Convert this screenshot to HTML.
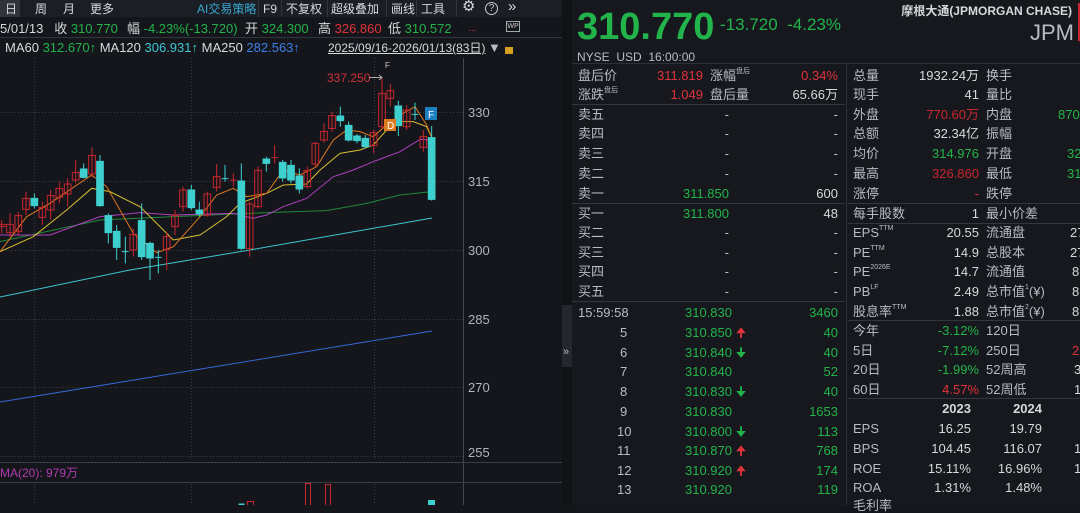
<!DOCTYPE html>
<html><head><meta charset="utf-8">
<style>
*{margin:0;padding:0;box-sizing:border-box}
body{width:1080px;height:505px;overflow:hidden;background:#14161b;font-family:"Liberation Sans","Noto Sans CJK SC",sans-serif;color:#c8ccd2;position:relative}
.t{position:absolute;white-space:nowrap;font-size:13px;line-height:14px}
.s{font-size:7px;line-height:7px;vertical-align:top;position:relative;top:-1px}
.g{color:#22b44a}.r{color:#e0333b}.dr{color:#c8262e}.w{color:#d5d8dc}.gy{color:#b8bcc2}.c{color:#3ec6d0}.b{color:#3d7fe6}
.hl{position:absolute;height:1px;background:#33363c}
.vl{position:absolute;width:1px;background:#33363c}
.tb{font-size:12px}
</style></head><body>
<!-- left toolbar -->
<div style="position:absolute;left:0;top:0;width:562px;height:17px;background:#1b1e24"></div>
<div style="position:absolute;left:0;top:0;width:20px;height:17px;background:#30333a"></div>
<div class="t w tb" style="left:5px;top:2px">日</div>
<div class="t w tb" style="left:35px;top:2px">周</div>
<div class="t w tb" style="left:63px;top:2px">月</div>
<div class="t w tb" style="left:90px;top:2px">更多</div>
<div class="t tb" style="left:197px;top:2px;color:#3aa7d0">AI交易策略</div>
<div class="t w tb" style="left:263px;top:2px">F9</div>
<div class="t w tb" style="left:286px;top:2px">不复权</div>
<div class="t w tb" style="left:331px;top:2px">超级叠加</div>
<div class="t w tb" style="left:391px;top:2px">画线</div>
<div class="t w tb" style="left:421px;top:2px">工具</div>
<div class="t w" style="left:462px;top:0px;font-size:15px">⚙</div>
<div style="position:absolute;left:485px;top:2px;width:13px;height:13px;border:1px solid #c8ccd2;border-radius:50%;font-size:10px;line-height:11px;text-align:center">?</div>
<div class="t w" style="left:508px;top:0px;font-size:15px">»</div>
<div class="vl" style="left:258px;top:0;height:17px"></div><div class="vl" style="left:281px;top:0;height:17px"></div>
<div class="vl" style="left:327px;top:0;height:17px"></div><div class="vl" style="left:386px;top:0;height:17px"></div>
<div class="vl" style="left:416px;top:0;height:17px"></div><div class="vl" style="left:456px;top:0;height:17px"></div>
<!-- row2 -->
<div class="t w" style="left:0;top:22px">5/01/13 &nbsp;&nbsp;收 <span class="g">310.770</span></div>
<div class="t w" style="left:127px;top:22px">幅 <span class="g">-4.23%(-13.720)</span></div>
<div class="t w" style="left:245px;top:22px">开 <span class="g">324.300</span></div>
<div class="t w" style="left:318px;top:22px">高 <span class="r">326.860</span></div>
<div class="t w" style="left:388px;top:22px">低 <span class="g">310.572</span></div>
<div class="t r" style="left:468px;top:22px;font-size:10px">...</div>
<div style="position:absolute;left:506px;top:21px;width:14px;height:11px;border:1px solid #9aa;font-size:7px;line-height:9px;text-align:center;color:#ccc">WP</div>
<div class="hl" style="left:0;top:37px;width:562px"></div>
<!-- row3 -->
<div class="t w" style="left:5px;top:41px">MA60 <span class="g">312.670↑</span> MA120 <span class="c">306.931↑</span> MA250 <span class="b">282.563↑</span></div>
<div class="t w" style="left:328px;top:41px;font-size:12px;text-decoration:underline">2025/09/16-2026/01/13(83日)</div>
<div class="t gy" style="left:488px;top:41px">▼</div>
<div style="position:absolute;left:505px;top:47px;width:8px;height:7px;background:#d8a020"></div>
<!-- chart -->
<svg style="position:absolute;left:0;top:0" width="562" height="505">
<g stroke="#3a3d44" stroke-dasharray="1,2" stroke-width="1">
<line x1="0" y1="112.5" x2="463" y2="112.5"/><line x1="0" y1="181.5" x2="463" y2="181.5"/><line x1="0" y1="250.5" x2="463" y2="250.5"/><line x1="0" y1="319.5" x2="463" y2="319.5"/><line x1="0" y1="387.5" x2="463" y2="387.5"/><line x1="0" y1="456.5" x2="463" y2="456.5"/>
<line x1="34.5" y1="58" x2="34.5" y2="460"/><line x1="191.5" y1="58" x2="191.5" y2="460"/><line x1="374.5" y1="58" x2="374.5" y2="460"/>
<line x1="34.5" y1="484" x2="34.5" y2="505"/><line x1="191.5" y1="484" x2="191.5" y2="505"/><line x1="374.5" y1="484" x2="374.5" y2="505"/>
</g>
<line x1="463.5" y1="58" x2="463.5" y2="505" stroke="#44474e"/>
<line x1="0" y1="462.5" x2="562" y2="462.5" stroke="#3a3d44"/>
<line x1="0" y1="482.5" x2="562" y2="482.5" stroke="#3a3d44"/>
<g fill="#b0b4ba" font-size="13" font-family="Liberation Sans"><text x="468" y="117">330</text><text x="468" y="186">315</text><text x="468" y="255">300</text><text x="468" y="324">285</text><text x="468" y="392">270</text><text x="468" y="457">255</text></g>
<text x="0" y="477" fill="#b03cb0" font-size="12" font-family="Liberation Sans">MA(20): 979万</text>
<polyline fill="none" stroke="#3ec6d0" stroke-width="1" points="0,297 130,270 250,250 432,218"/>
<polyline fill="none" stroke="#3568d8" stroke-width="1" points="0,402 432,331"/>
<g transform="translate(0,60) scale(0.33333)" fill="none" stroke-width="3">
<polyline stroke="#1f8a3a" points="0,545 300,480 700,462 800,458 980,452 1100,430 1200,405 1295,395"/>
<polyline stroke="#b040c0" points="0,525 150,525 300,470 420,458 520,465 700,460 760,475 800,465 850,440 920,415 1000,350 1060,330 1120,305 1200,275 1260,238 1295,240"/>
<polyline stroke="#d8c030" points="0,575 100,530 200,450 275,385 330,395 420,440 520,540 600,525 680,470 720,430 800,400 850,375 920,372 960,330 1020,280 1080,270 1120,255 1160,210 1200,185 1240,185 1280,200 1295,232"/>
<polyline stroke="#e07a20" points="0,575 80,470 150,430 275,345 320,380 400,520 470,578 520,560 600,470 650,405 700,385 740,410 800,400 850,330 900,345 950,320 1000,240 1040,210 1080,215 1120,230 1160,195 1200,165 1245,140 1280,195 1295,232"/>
</g>
<g transform="translate(0,60) scale(0.33333)" stroke-width="3">
<g fill="none" stroke="#c8262e">
<path d="M5 480V520M-5 493h20v7h-20z"/>
<path d="M30 460V530M20 493h20v25h-20z"/>
<path d="M55 455V525M45 467h20v48h-20z"/>
<path d="M78 395V465M68 415h20v33h-20z"/>
<path d="M127 425V495M117 443h20v29h-20z"/>
<path d="M152 390V480M142 407h20v43h-20z"/>
<path d="M178 365V430M168 385h20v27h-20z"/>
<path d="M203 355V440M193 372h20v30h-20z"/>
<path d="M227 300V370M217 337h20v23h-20z"/>
<path d="M276 262V352M266 286h20v56h-20z"/>
<path d="M400 505V590M390 523h20v47h-20z"/>
<path d="M500 515V630M490 530h20v38h-20z"/>
<path d="M525 450V525M515 466h20v34h-20z"/>
<path d="M549 380V455M539 390h20v50h-20z"/>
<path d="M622 395V470M612 402h20v63h-20z"/>
<path d="M650 312V395M640 350h20v33h-20z"/>
<path d="M700 340V380M690 360h20"/>
<path d="M749 425V590M739 432h20v133h-20z"/>
<path d="M774 320V445M764 331h20v109h-20z"/>
<path d="M824 255V310M814 293h20"/>
<path d="M922 320V385M912 332h20v48h-20z"/>
<path d="M946 245V320M936 250h20v62h-20z"/>
<path d="M972 190V248M962 214h20v26h-20z"/>
<path d="M996 155V215M986 167h20v38h-20z"/>
<path d="M1121 210V280M1111 218h20v39h-20z"/>
<path d="M1146 55V205M1136 100h20v100h-20z"/>
<path d="M1171 72V140M1161 92h20v23h-20z"/>
<path d="M1220 135V210M1210 150h20v50h-20z"/>
<path d="M1270 210V275M1260 230h20v32h-20z"/>
</g>
<g fill="#3ecfcf" stroke="#3ecfcf">
<path d="M103 400V445M93 415h20v22h-20z"/>
<path d="M251 310V355M241 327h20v25h-20z"/>
<path d="M300 285V440M290 304h20v133h-20z"/>
<path d="M325 460V550M315 467h20v51h-20z"/>
<path d="M350 495V600M340 514h20v48h-20z"/>
<path d="M376 530V610M366 575h20"/>
<path d="M425 430V600M415 482h20v108h-20z"/>
<path d="M450 545V660M440 550h20v44h-20z"/>
<path d="M475 570V640M465 592h20"/>
<path d="M574 375V450M564 390h20v53h-20z"/>
<path d="M598 425V470M588 450h20v12h-20z"/>
<path d="M675 315V365M665 356h20"/>
<path d="M724 310V570M714 363h20v202h-20z"/>
<path d="M799 290V335M789 297h20v13h-20z"/>
<path d="M848 300V365M838 307h20v47h-20z"/>
<path d="M873 300V370M863 316h20v44h-20z"/>
<path d="M898 325V400M888 348h20v39h-20z"/>
<path d="M1021 140V200M1011 168h20v14h-20z"/>
<path d="M1046 185V245M1036 196h20v44h-20z"/>
<path d="M1071 222V250M1061 228h20v14h-20z"/>
<path d="M1096 225V265M1086 235h20v25h-20z"/>
<path d="M1195 122V228M1185 138h20v59h-20z"/>
<path d="M1245 128V180M1235 163h20"/>
<path d="M1295 198V422M1285 233h20v185h-20z"/>
</g>
</g>
<text x="327" y="82" fill="#d0303a" font-size="12" font-family="Liberation Sans">337.250</text>
<path d="M369 77.5h13M379 75l3 2.5-3 2.5" stroke="#aaa" fill="none"/>
<text x="385" y="68" fill="#ccc" font-size="8" font-family="Liberation Sans">F</text>
<rect x="384" y="119" width="12" height="12" fill="#e07a20"/><text x="387" y="129" fill="#fff" font-size="10" font-family="Liberation Sans">D</text>
<rect x="425" y="107" width="12" height="13" fill="#1e7fc0"/><text x="428" y="118" fill="#fff" font-size="10" font-family="Liberation Sans">F</text>
<rect x="238.5" y="503.5" width="6" height="3" fill="#3ecfcf"/><rect x="247.5" y="501.5" width="6" height="5" fill="none" stroke="#c8262e"/>
<rect x="305.5" y="483.5" width="5" height="22" fill="none" stroke="#c8262e"/><rect x="325.5" y="484.5" width="5" height="22" fill="none" stroke="#c8262e"/>
<rect x="428" y="500" width="7" height="6" fill="#3ecfcf"/>
</svg>
<!-- separator -->
<div style="position:absolute;left:562px;top:0;width:10px;height:505px;background:#101216"></div>
<div style="position:absolute;left:562px;top:305px;width:10px;height:62px;background:#24272d"></div>
<div class="t gy" style="left:563px;top:345px;font-size:11px">»</div>
<!-- right panel -->
<div style="position:absolute;left:572px;top:0;width:508px;height:505px;background:#16181d"></div>
<div class="t g" style="left:577px;top:7px;font-size:38px;line-height:40px;font-weight:bold">310.770</div>
<div class="t g" style="left:720px;top:15px;font-size:17px;line-height:20px">-13.720&nbsp;&nbsp;-4.23%</div>
<div class="t w" style="right:8px;top:4px;font-size:12px;font-weight:bold">摩根大通(JPMORGAN CHASE)</div>
<div class="t gy" style="right:6px;top:21px;font-size:22px;line-height:24px">JPM</div>
<div style="position:absolute;left:1078px;top:3px;width:2px;height:38px;background:#c8262e"></div>
<div class="t gy" style="left:577px;top:50px;font-size:12px">NYSE&nbsp; USD&nbsp; 16:00:00</div>
<div class="hl" style="left:572px;top:63px;width:508px;background:#2e3137"></div>
<div class="vl" style="left:846px;top:64px;height:441px;background:#2e3137"></div>
<div class="hl" style="left:572px;top:104px;width:273px"></div>
<div class="hl" style="left:572px;top:203px;width:273px"></div>
<div class="hl" style="left:572px;top:301px;width:273px"></div>
<div class="hl" style="left:848px;top:203px;width:232px"></div>
<div class="hl" style="left:848px;top:223px;width:232px"></div>
<div class="hl" style="left:848px;top:320px;width:232px"></div>
<div class="hl" style="left:848px;top:398px;width:232px"></div>

<!-- left subpanel -->
<div class="t gy" style="left:578px;top:69px">盘后价</div><div class="t r" style="right:377px;top:69px">311.819</div>
<div class="t gy" style="left:710px;top:69px">涨幅<span class="s">盘后</span></div><div class="t r" style="right:242px;top:69px">0.34%</div>
<div class="t gy" style="left:578px;top:88px">涨跌<span class="s">盘后</span></div><div class="t r" style="right:377px;top:88px">1.049</div>
<div class="t gy" style="left:710px;top:88px">盘后量</div><div class="t w" style="right:242px;top:88px">65.66万</div>

<div class="t gy" style="left:578px;top:108px">卖五</div><div class="t gy" style="right:351px;top:108px">-</div><div class="t gy" style="right:242px;top:108px">-</div>
<div class="t gy" style="left:578px;top:127px">卖四</div><div class="t gy" style="right:351px;top:127px">-</div><div class="t gy" style="right:242px;top:127px">-</div>
<div class="t gy" style="left:578px;top:147px">卖三</div><div class="t gy" style="right:351px;top:147px">-</div><div class="t gy" style="right:242px;top:147px">-</div>
<div class="t gy" style="left:578px;top:167px">卖二</div><div class="t gy" style="right:351px;top:167px">-</div><div class="t gy" style="right:242px;top:167px">-</div>
<div class="t gy" style="left:578px;top:187px">卖一</div><div class="t g" style="right:351px;top:187px">311.850</div><div class="t w" style="right:242px;top:187px">600</div>
<div class="t gy" style="left:578px;top:207px">买一</div><div class="t g" style="right:351px;top:207px">311.800</div><div class="t w" style="right:242px;top:207px">48</div>
<div class="t gy" style="left:578px;top:226px">买二</div><div class="t gy" style="right:351px;top:226px">-</div><div class="t gy" style="right:242px;top:226px">-</div>
<div class="t gy" style="left:578px;top:246px">买三</div><div class="t gy" style="right:351px;top:246px">-</div><div class="t gy" style="right:242px;top:246px">-</div>
<div class="t gy" style="left:578px;top:265px">买四</div><div class="t gy" style="right:351px;top:265px">-</div><div class="t gy" style="right:242px;top:265px">-</div>
<div class="t gy" style="left:578px;top:285px">买五</div><div class="t gy" style="right:351px;top:285px">-</div><div class="t gy" style="right:242px;top:285px">-</div>

<div class="t gy" style="left:578px;top:306px">15:59:58</div><div class="t g" style="left:685px;top:306px">310.830</div><div class="t g" style="right:242px;top:306px">3460</div>
<div class="t gy" style="left:620px;top:326px">5</div><div class="t g" style="left:685px;top:326px">310.850 <span class="r">🠉</span></div><div class="t g" style="right:242px;top:326px">40</div>
<div class="t gy" style="left:620px;top:346px">6</div><div class="t g" style="left:685px;top:346px">310.840 <span>🠋</span></div><div class="t g" style="right:242px;top:346px">40</div>
<div class="t gy" style="left:620px;top:365px">7</div><div class="t g" style="left:685px;top:365px">310.840</div><div class="t g" style="right:242px;top:365px">52</div>
<div class="t gy" style="left:620px;top:385px">8</div><div class="t g" style="left:685px;top:385px">310.830 <span>🠋</span></div><div class="t g" style="right:242px;top:385px">40</div>
<div class="t gy" style="left:620px;top:405px">9</div><div class="t g" style="left:685px;top:405px">310.830</div><div class="t g" style="right:242px;top:405px">1653</div>
<div class="t gy" style="left:617px;top:425px">10</div><div class="t g" style="left:685px;top:425px">310.800 <span>🠋</span></div><div class="t g" style="right:242px;top:425px">113</div>
<div class="t gy" style="left:617px;top:444px">11</div><div class="t g" style="left:685px;top:444px">310.870 <span class="r">🠉</span></div><div class="t g" style="right:242px;top:444px">768</div>
<div class="t gy" style="left:617px;top:464px">12</div><div class="t g" style="left:685px;top:464px">310.920 <span class="r">🠉</span></div><div class="t g" style="right:242px;top:464px">174</div>
<div class="t gy" style="left:617px;top:483px">13</div><div class="t g" style="left:685px;top:483px">310.920</div><div class="t g" style="right:242px;top:483px">119</div>

<!-- right subpanel -->
<div class="t gy" style="left:853px;top:69px">总量</div><div class="t w" style="right:101px;top:69px">1932.24万</div><div class="t gy" style="left:986px;top:69px">换手</div>
<div class="t gy" style="left:853px;top:88px">现手</div><div class="t w" style="right:101px;top:88px">41</div><div class="t gy" style="left:986px;top:88px">量比</div>
<div class="t gy" style="left:853px;top:108px">外盘</div><div class="t dr" style="right:101px;top:108px">770.60万</div><div class="t gy" style="left:986px;top:108px">内盘</div><div class="t g" style="left:1058px;top:108px">870</div>
<div class="t gy" style="left:853px;top:127px">总额</div><div class="t w" style="right:101px;top:127px">32.34亿</div><div class="t gy" style="left:986px;top:127px">振幅</div>
<div class="t gy" style="left:853px;top:147px">均价</div><div class="t g" style="right:101px;top:147px">314.976</div><div class="t gy" style="left:986px;top:147px">开盘</div><div class="t g" style="left:1067px;top:147px">32</div>
<div class="t gy" style="left:853px;top:167px">最高</div><div class="t dr" style="right:101px;top:167px">326.860</div><div class="t gy" style="left:986px;top:167px">最低</div><div class="t g" style="left:1067px;top:167px">31</div>
<div class="t gy" style="left:853px;top:187px">涨停</div><div class="t r" style="right:101px;top:187px">-</div><div class="t gy" style="left:986px;top:187px">跌停</div>
<div class="t gy" style="left:853px;top:207px">每手股数</div><div class="t w" style="right:101px;top:207px">1</div><div class="t gy" style="left:986px;top:207px">最小价差</div>
<div class="t gy" style="left:853px;top:226px">EPS<span class="s">TTM</span></div><div class="t w" style="right:101px;top:226px">20.55</div><div class="t gy" style="left:986px;top:226px">流通盘</div><div class="t w" style="left:1070px;top:226px">27</div>
<div class="t gy" style="left:853px;top:246px">PE<span class="s">TTM</span></div><div class="t w" style="right:101px;top:246px">14.9</div><div class="t gy" style="left:986px;top:246px">总股本</div><div class="t w" style="left:1070px;top:246px">27</div>
<div class="t gy" style="left:853px;top:265px">PE<span class="s">2026E</span></div><div class="t w" style="right:101px;top:265px">14.7</div><div class="t gy" style="left:986px;top:265px">流通值</div><div class="t w" style="left:1072px;top:265px">8</div>
<div class="t gy" style="left:853px;top:285px">PB<span class="s">LF</span></div><div class="t w" style="right:101px;top:285px">2.49</div><div class="t gy" style="left:986px;top:285px">总市值<span class="s">1</span>(¥)</div><div class="t w" style="left:1072px;top:285px">8</div>
<div class="t gy" style="left:853px;top:305px">股息率<span class="s">TTM</span></div><div class="t w" style="right:101px;top:305px">1.88</div><div class="t gy" style="left:986px;top:305px">总市值<span class="s">2</span>(¥)</div><div class="t w" style="left:1072px;top:305px">8</div>
<div class="t gy" style="left:853px;top:324px">今年</div><div class="t g" style="right:101px;top:324px">-3.12%</div><div class="t gy" style="left:986px;top:324px">120日</div>
<div class="t gy" style="left:853px;top:344px">5日</div><div class="t g" style="right:101px;top:344px">-7.12%</div><div class="t gy" style="left:986px;top:344px">250日</div><div class="t r" style="left:1072px;top:344px">2</div>
<div class="t gy" style="left:853px;top:363px">20日</div><div class="t g" style="right:101px;top:363px">-1.99%</div><div class="t gy" style="left:986px;top:363px">52周高</div><div class="t w" style="left:1074px;top:363px">3</div>
<div class="t gy" style="left:853px;top:383px">60日</div><div class="t r" style="right:101px;top:383px">4.57%</div><div class="t gy" style="left:986px;top:383px">52周低</div><div class="t w" style="left:1074px;top:383px">1</div>
<div class="t w" style="right:109px;top:402px;font-weight:bold">2023</div><div class="t w" style="right:38px;top:402px;font-weight:bold">2024</div>
<div class="t gy" style="left:853px;top:422px">EPS</div><div class="t w" style="right:109px;top:422px">16.25</div><div class="t w" style="right:38px;top:422px">19.79</div>
<div class="t gy" style="left:853px;top:442px">BPS</div><div class="t w" style="right:109px;top:442px">104.45</div><div class="t w" style="right:38px;top:442px">116.07</div><div class="t w" style="left:1074px;top:442px">1</div>
<div class="t gy" style="left:853px;top:462px">ROE</div><div class="t w" style="right:109px;top:462px">15.11%</div><div class="t w" style="right:38px;top:462px">16.96%</div><div class="t w" style="left:1074px;top:462px">1</div>
<div class="t gy" style="left:853px;top:481px">ROA</div><div class="t w" style="right:109px;top:481px">1.31%</div><div class="t w" style="right:38px;top:481px">1.48%</div>
<div class="t gy" style="left:853px;top:499px">毛利率</div>
</body></html>
